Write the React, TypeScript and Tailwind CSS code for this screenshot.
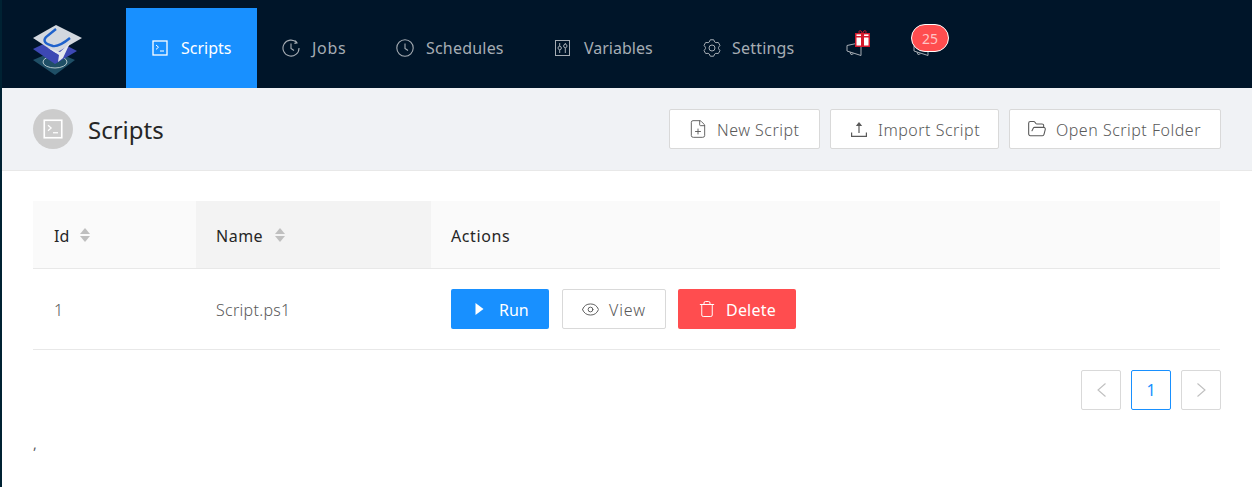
import React from 'react';
import { Eye, Trash, FolderOpen, FilePlus } from 'lucide-react';

const font = 'font-["Noto_Sans","Open_Sans",sans-serif]';

const TerminalBox = ({ className }: { className: string }) => (
  <svg viewBox="0 0 16 16" fill="none" stroke="currentColor" className={className}>
    <rect x="1" y="1" width="14" height="14" strokeWidth="1.3" />
    <path d="M4 5l2.5 2.2L4 9.4" strokeWidth="1" />
    <path d="M8 11h4" strokeWidth="1" />
  </svg>
);

const SlidersBox = () => (
  <svg viewBox="0 0 15 16" fill="none" stroke="currentColor" strokeWidth="1" className="w-[15px] h-[16px]">
    <rect x="0.5" y="0.5" width="14" height="15" />
    <path d="M4.7 3v3M4.7 10v3M10.3 3v1M10.3 8v5" />
    <circle cx="4.7" cy="8" r="1.7" />
    <circle cx="10.3" cy="6" r="1.7" />
  </svg>
);

const JobClock = () => (
  <svg viewBox="0 0 18 18" fill="none" stroke="currentColor" strokeWidth="1.1" className="w-[18px] h-[18px]">
    <path d="M14.8 3.6A8 8 0 1 0 17 9" />
    <path d="M13.2 1.6l1.8 2.2-2.6.6" />
    <path d="M9 4.5V9.5l3 2" />
  </svg>
);

const PlainClock = () => (
  <svg viewBox="0 0 18 18" fill="none" stroke="currentColor" strokeWidth="1.1" className="w-[18px] h-[18px]">
    <circle cx="9" cy="9" r="8.2" />
    <path d="M9 4.5V9.5l3 2" />
  </svg>
);

const gearPoints = Array.from({ length: 6 }, (_, k) => {
  const a = ((k * 60 + 30) * Math.PI) / 180;
  const at = (r: number, d: number) => `${(9 + r * Math.cos(a + d)).toFixed(2)} ${(9 + r * Math.sin(a + d)).toFixed(2)}`;
  return `${at(6.6, -0.42)} L${at(8.4, -0.2)} L${at(8.4, 0.2)} L${at(6.6, 0.42)}`;
});

const Gear = () => (
  <svg viewBox="0 0 18 18" fill="none" stroke="currentColor" strokeWidth="1" strokeLinejoin="round" className="w-[18px] h-[18px]">
    <path d={`M${gearPoints.join(' L')} Z`} />
    <circle cx="9" cy="9" r="3" />
  </svg>
);

const UploadTray = () => (
  <svg viewBox="0 0 16 16" className="w-[16px] h-[16px]">
    <path d="M0.6 11.5v3.9h14.8v-3.9" fill="none" stroke="currentColor" strokeWidth="1.2" />
    <path d="M8 12V3" fill="none" stroke="currentColor" strokeWidth="1.2" />
    <path d="M4.8 5L8 1l3.2 4z" fill="currentColor" />
  </svg>
);

const Logo = () => (
  <svg viewBox="0 0 50 50" className="w-[50px] h-[50px]">
    <path d="M0 35l21-9 21 9-20 15z" fill="#1f4f66" />
    <ellipse cx="22" cy="37" rx="12" ry="6" fill="none" stroke="#c3d2d6" strokeWidth="0.9" />
    <path d="M0 24l21-10 23 12-22 13z" fill="#3d48b4" />
    <path d="M0 13L23 0l26 13-26 15z" fill="#d3d8df" />
    <path d="M23 4L13 12Q8 18 20 21Q26 22 37 13" fill="none" stroke="#1f62cc" strokeWidth="2.4" />
    <path d="M37 18l-10 9-12-4 11 7-1 7 5-4z" fill="#e4e7ee" />
  </svg>
);

const Megaphone = () => (
  <svg viewBox="0 0 16 14" fill="none" stroke="#a6adb4" strokeWidth="1" className="w-[16px] h-[14px]">
    <path d="M1 3.5L15 0.5V13.5L1 9z" />
    <path d="M4 10l1 2.5 2.5-.7" />
  </svg>
);

const Gift = () => (
  <svg viewBox="0 0 15 17" className="absolute left-[9px] top-[-12px] w-[15px] h-[17px]">
    <path d="M4.5 3.5C3 1 5 0 6 1l1.5 2.5M10.5 3.5C12 1 10 0 9 1L7.5 3.5" fill="none" stroke="#d5192c" strokeWidth="1" />
    <rect x="0" y="3" width="15" height="14" fill="#d5192c" />
    <rect x="1.5" y="7.5" width="12" height="8" fill="#ffffff" />
    <rect x="1.5" y="4.4" width="12" height="1.6" fill="#ffffff" />
    <rect x="6" y="3" width="3" height="14" fill="#d5192c" />
  </svg>
);

const NavItem = ({ icon, label, className }: { icon: React.ReactNode; label: string; className: string }) => (
  <div className={`flex items-center h-[80px] text-[16px] ${className}`}>
    {icon}
    <span>{label}</span>
  </div>
);

const HeaderButton = ({ icon, label, className }: { icon: React.ReactNode; label: string; className: string }) => (
  <div className={`flex items-center h-[40px] bg-white border border-[#d9d9d9] rounded-[2px] text-[16px] text-[#595959] font-light tracking-[0.5px] ${className}`}>
    {icon}
    <span className="pt-[2px]">{label}</span>
  </div>
);

const SortArrows = ({ className }: { className: string }) => (
  <div className={`flex flex-col gap-[2px] ${className}`}>
    <div className="w-0 h-0 border-x-[5.5px] border-x-transparent border-b-[6px] border-b-[#bfbfbf]" />
    <div className="w-0 h-0 border-x-[5.5px] border-x-transparent border-t-[6px] border-t-[#bfbfbf]" />
  </div>
);

const PageButton = ({ children, active }: { children: React.ReactNode; active?: boolean }) => (
  <div className={`flex items-center justify-center w-[40px] h-[40px] rounded-[2px] border ${active ? 'border-[#1890ff] text-[#1890ff]' : 'border-[#d9d9d9] text-[#bfbfbf]'}`}>
    {children}
  </div>
);

export default function App() {
  return (
    <div className={`${font} h-[487px] w-[1252px] overflow-hidden bg-white flex flex-col border-l-2 border-l-[#002233] text-[16px]`}>
      <div className="h-[88px] bg-[#001529] flex items-end shrink-0">
        <div className="w-[124px] h-[88px] flex items-center pl-[31px] pt-[12px]">
          <Logo />
        </div>
        <NavItem className="w-[131px] pl-[26px] gap-[13px] bg-[#1890ff] text-white" label="Scripts" icon={<TerminalBox className="w-[16px] h-[16px]" />} />
        <NavItem className="w-[114px] pl-[25px] gap-[12px] text-[#a6adb4] tracking-[0.7px]" label="Jobs" icon={<JobClock />} />
        <NavItem className="w-[159px] pl-[25px] gap-[12px] text-[#a6adb4] tracking-[0.2px]" label="Schedules" icon={<PlainClock />} />
        <NavItem className="w-[148px] pl-[25px] gap-[14px] text-[#a6adb4]" label="Variables" icon={<SlidersBox />} />
        <NavItem className="w-[142px] pl-[25px] gap-[11px] text-[#a6adb4] tracking-[0.2px]" label="Settings" icon={<Gear />} />
        <div className="h-[80px] flex items-center ml-[26px]">
          <div className="relative w-[16px] h-[14px] mt-[2px]">
            <Megaphone />
            <Gift />
          </div>
        </div>
        <div className="h-[80px] flex items-center ml-[51px]">
          <div className="relative w-[16px] h-[14px] mt-[2px]">
            <Megaphone />
            <div className="absolute left-[-2px] top-[-18px] w-[38px] h-[28px] rounded-full bg-[#ff4d4f] border border-white text-[14px] text-[#ffc4c4] flex items-center justify-center">25</div>
          </div>
        </div>
      </div>

      <div className="h-[83px] bg-[#f0f2f5] border-b border-b-[#e8e8e8] flex items-center justify-between pl-[31px] pr-[31px] shrink-0">
        <div className="flex items-center gap-[15px]">
          <div className="w-[40px] h-[40px] rounded-full bg-[#cccccc] flex items-center justify-center text-white">
            <TerminalBox className="w-[20px] h-[20px]" />
          </div>
          <div className="text-[24px] text-[#262626] pt-[2px]">Scripts</div>
        </div>
        <div className="flex gap-[10px]">
          <HeaderButton className="w-[151px] pl-[18px] gap-[9px]" label="New Script" icon={<FilePlus size={20} strokeWidth={1.1} />} />
          <HeaderButton className="w-[169px] pl-[20px] gap-[11px]" label="Import Script" icon={<UploadTray />} />
          <HeaderButton className="w-[212px] pl-[17px] gap-[9px]" label="Open Script Folder" icon={<FolderOpen size={20} strokeWidth={1.3} />} />
        </div>
      </div>

      <div className="pt-[30px] pl-[31px] w-[1219px]">
        <div className="grid grid-cols-[163px_235px_1fr] w-[1187px] h-[68px] bg-[#fafafa] border-b border-b-[#e8e8e8] text-[#262626]">
          <div className="flex items-center pl-[21px]"><span className="pt-[2px]">Id</span><SortArrows className="ml-[11px]" /></div>
          <div className="flex items-center pl-[20px] bg-[#f3f3f3]"><span className="pt-[2px] tracking-[0.5px]">Name</span><SortArrows className="ml-[12px]" /></div>
          <div className="flex items-center pl-[20px]"><span className="pt-[2px] tracking-[0.6px]">Actions</span></div>
        </div>
        <div className="grid grid-cols-[163px_235px_1fr] w-[1187px] h-[81px] border-b border-b-[#e8e8e8] text-[#595959] font-light">
          <div className="flex items-center pl-[21px]"><span className="pt-[2px]">1</span></div>
          <div className="flex items-center pl-[20px]"><span className="pt-[2px] tracking-[0.3px]">Script.ps1</span></div>
          <div className="flex items-center pl-[20px]">
            <div className="flex items-center gap-[15px] pl-[24px] w-[98px] h-[40px] rounded-[2px] bg-[#1890ff] text-white font-normal">
              <svg viewBox="0 0 8 12" className="w-[9px] h-[12px]" fill="currentColor"><path d="M0 0l8 6-8 6z" /></svg>
              <span className="pt-[2px]">Run</span>
            </div>
            <div className="flex items-center gap-[9px] pl-[18px] ml-[13px] w-[104px] h-[40px] rounded-[2px] border border-[#d9d9d9] text-[#595959] tracking-[0.9px]">
              <Eye size={19} strokeWidth={1.2} />
              <span className="pt-[2px]">View</span>
            </div>
            <div className="flex items-center gap-[10px] pl-[20px] ml-[12px] w-[118px] h-[40px] rounded-[2px] bg-[#ff4d4f] text-white font-normal tracking-[0.2px]">
              <Trash size={18} strokeWidth={1.3} />
              <span className="pt-[2px]">Delete</span>
            </div>
          </div>
        </div>
        <div className="flex justify-end gap-[10px] mt-[20px] w-[1188px]">
          <PageButton>
            <svg viewBox="0 0 9 14" fill="none" stroke="currentColor" strokeWidth="1.1" className="w-[9px] h-[14px]"><path d="M8.5 0.5L1 7l7.5 6.5" /></svg>
          </PageButton>
          <PageButton active>1</PageButton>
          <PageButton>
            <svg viewBox="0 0 9 14" fill="none" stroke="currentColor" strokeWidth="1.1" className="w-[9px] h-[14px]"><path d="M0.5 0.5L8 7l-7.5 6.5" /></svg>
          </PageButton>
        </div>
        <div className="mt-[24px] text-[14px] text-[#595959] leading-[20px]">,</div>
      </div>
    </div>
  );
}
